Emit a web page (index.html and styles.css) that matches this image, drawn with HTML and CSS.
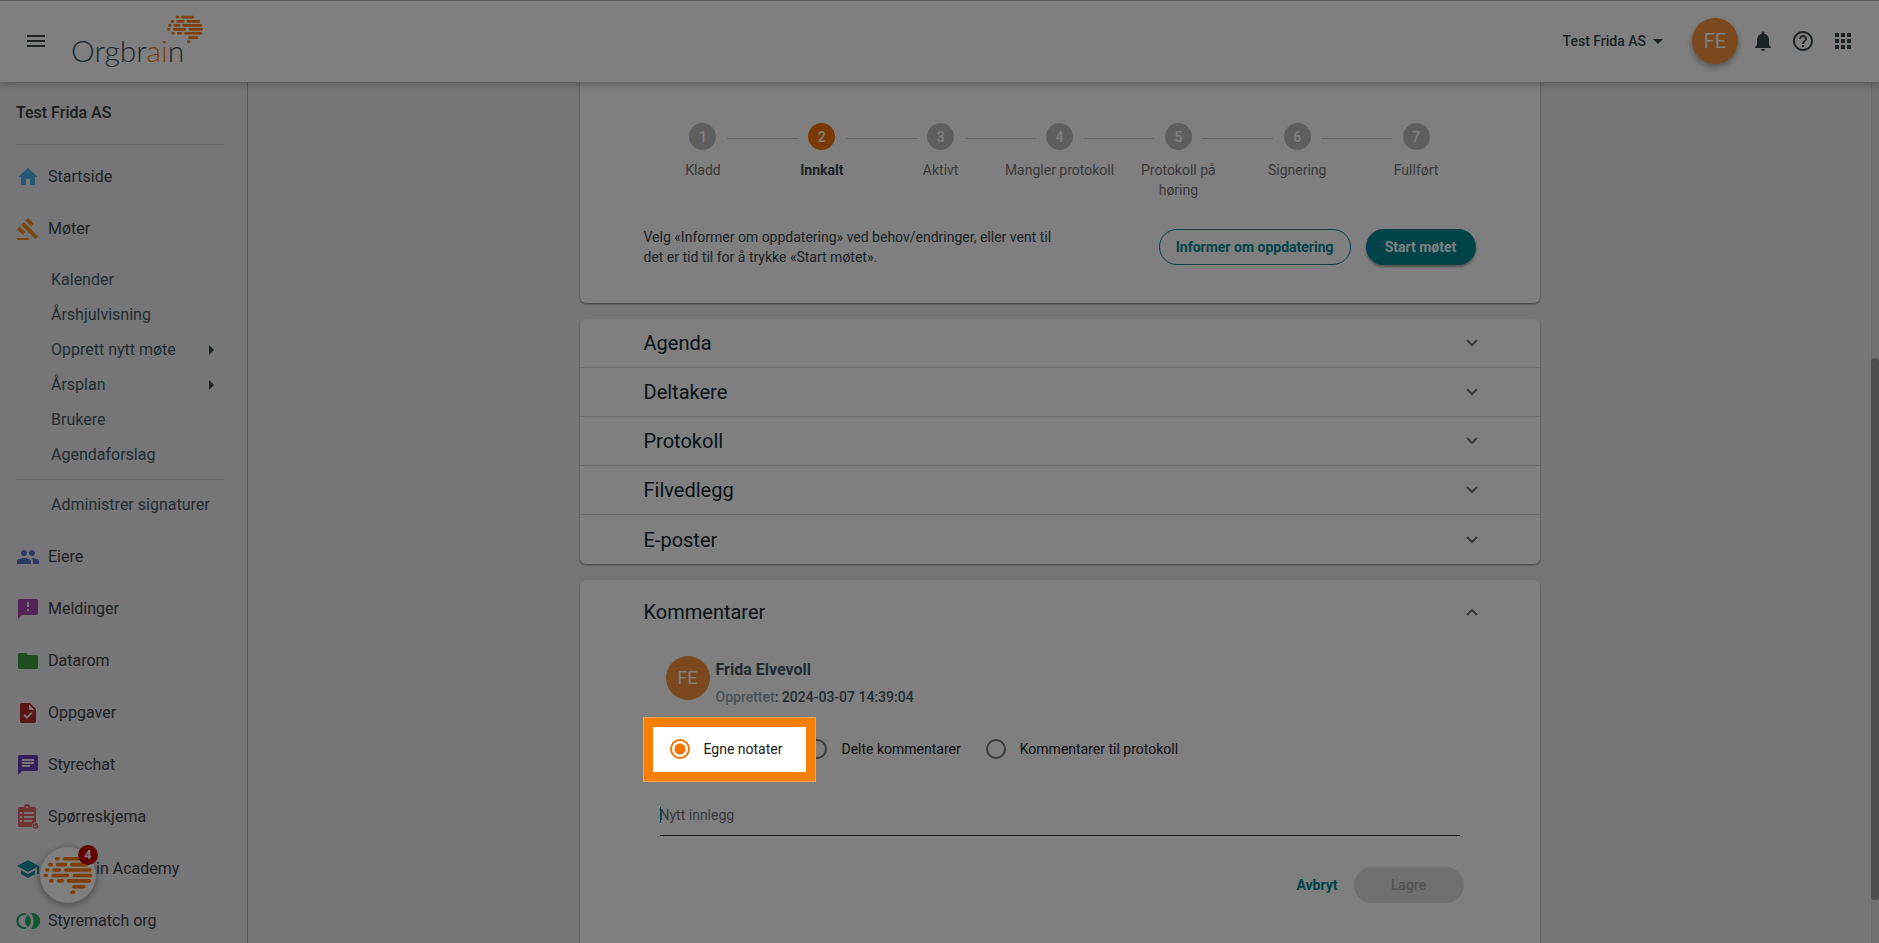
FILE: index.html
```html
<!DOCTYPE html>
<html lang="no">
<head>
<meta charset="utf-8">
<title>Orgbrain</title>
<link rel="stylesheet" href="styles.css">
</head>
<body>
<svg class="defs" aria-hidden="true">
  <symbol id="brain" viewBox="0 0 112 84">
    <path fill="none" stroke="currentColor" stroke-width="8" stroke-linecap="round" d="M30 6h3M47 6h31M15 19h3M32 19h17M63 19h33M8 31h2M24 31h12M50 31h53M5 43h2M22 43h32M69 43h36M17 55h2M34 55h8M56 55h46M68 68h22M64 80h3"/>
  </symbol>
  <symbol id="down" viewBox="0 0 12 8"><path fill="none" stroke="currentColor" stroke-width="2" d="M1 1l5 5 5-5"/></symbol>
</svg>

<header class="topbar">
  <button class="icon-btn" aria-label="Meny"><svg class="icon" viewBox="0 0 24 24"><path d="M3 18h18v-2H3v2zm0-5h18v-2H3v2zm0-7v2h18V6H3z"/></svg></button>
  <a class="logo" href="#"><span class="logo-text">Orgbr<span class="logo-accent">ai</span>n</span><svg class="logo-mark"><use href="#brain"/></svg></a>
  <div class="tools">
    <button class="org-btn">Test Frida AS<svg class="icon" viewBox="0 0 24 24"><path d="M7 10l5 5 5-5z"/></svg></button>
    <button class="avatar avatar-top">FE</button>
    <button class="icon-btn" aria-label="Varsler"><svg class="icon" viewBox="0 0 24 24"><path d="M12 22c1.1 0 2-.9 2-2h-4c0 1.1.89 2 2 2zm6-6v-5c0-3.07-1.64-5.64-4.5-6.32V4c0-.83-.67-1.5-1.5-1.5s-1.5.67-1.5 1.5v.68C7.63 5.36 6 7.92 6 11v5l-2 2v1h16v-1l-2-2z"/></svg></button>
    <button class="icon-btn" aria-label="Hjelp"><svg class="icon" viewBox="0 0 24 24"><path d="M11 18h2v-2h-2v2zm1-16C6.48 2 2 6.48 2 12s4.48 10 10 10 10-4.48 10-10S17.52 2 12 2zm0 18c-4.41 0-8-3.59-8-8s3.59-8 8-8 8 3.59 8 8-3.59 8-8 8zm0-14c-2.21 0-4 1.79-4 4h2c0-1.1.9-2 2-2s2 .9 2 2c0 2-3 1.75-3 5h2c0-2.25 3-2.5 3-5 0-2.21-1.79-4-4-4z"/></svg></button>
    <button class="icon-btn" aria-label="Apper"><svg class="icon" viewBox="0 0 24 24"><path d="M4 8h4V4H4v4zm6 12h4v-4h-4v4zm-6 0h4v-4H4v4zm0-6h4v-4H4v4zm6 0h4v-4h-4v4zm6-10v4h4V4h-4zm-6 4h4V4h-4v4zm6 6h4v-4h-4v4zm0 6h4v-4h-4v4z"/></svg></button>
  </div>
</header>

<div class="layout">
  <nav class="sidebar">
    <h2 class="side-title">Test Frida AS</h2>
    <hr class="rule">
    <div class="nav-group">
      <a class="nav-item" href="#"><svg class="icon c-blue" viewBox="0 0 24 24"><path d="M10 20v-6h4v6h5v-8h3L12 3 2 12h3v8z"/></svg>Startside</a>
      <a class="nav-item" href="#"><svg class="icon c-orange" viewBox="0 0 24 24"><path d="M5.25 8.07l2.83-2.83 14.13 14.15-2.83 2.83zM9.49 3.83L12.31 1l5.66 5.66-2.83 2.82zM1 12.31l2.83-2.82 5.65 5.65-2.82 2.83zM1 21h12v2H1z"/></svg>Møter</a>
    </div>
    <div class="sub-group">
      <a class="sub-item" href="#">Kalender</a>
      <a class="sub-item" href="#">Årshjulvisning</a>
      <a class="sub-item" href="#">Opprett nytt møte<svg class="icon" viewBox="0 0 24 24"><path d="M10 17l5-5-5-5z"/></svg></a>
      <a class="sub-item" href="#">Årsplan<svg class="icon" viewBox="0 0 24 24"><path d="M10 17l5-5-5-5z"/></svg></a>
      <a class="sub-item" href="#">Brukere</a>
      <a class="sub-item" href="#">Agendaforslag</a>
      <hr class="rule rule-sub">
      <a class="sub-item" href="#">Administrer signaturer</a>
    </div>
    <div class="nav-group">
      <a class="nav-item" href="#"><svg class="icon c-indigo" viewBox="0 0 24 24"><path d="M16 11c1.66 0 2.99-1.34 2.99-3S17.66 5 16 5c-1.66 0-3 1.34-3 3s1.34 3 3 3zm-8 0c1.66 0 2.99-1.34 2.99-3S9.66 5 8 5C6.34 5 5 6.34 5 8s1.34 3 3 3zm0 2c-2.33 0-7 1.17-7 3.5V19h14v-2.5c0-2.33-4.67-3.5-7-3.5zm8 0c-.29 0-.62.02-.97.05 1.16.84 1.97 1.97 1.97 3.45V19h6v-2.5c0-2.33-4.67-3.5-7-3.5z"/></svg>Eiere</a>
      <a class="nav-item" href="#"><svg class="icon c-purple" viewBox="0 0 24 24"><path d="M20 2H4c-1.1 0-1.99.9-1.99 2L2 22l4-4h14c1.1 0 2-.9 2-2V4c0-1.1-.9-2-2-2zm-7 12h-2v-2h2v2zm0-4h-2V5h2v5z"/></svg>Meldinger</a>
      <a class="nav-item" href="#"><svg class="icon c-green" viewBox="0 0 24 24"><path d="M10 4H4c-1.1 0-1.99.9-1.99 2L2 18c0 1.1.9 2 2 2h16c1.1 0 2-.9 2-2V8c0-1.1-.9-2-2-2h-8l-2-2z"/></svg>Datarom</a>
      <a class="nav-item" href="#"><svg class="icon c-red" viewBox="0 0 24 24"><path d="M14 2H6c-1.1 0-1.99.9-1.99 2L4 20c0 1.1.89 2 1.99 2H18c1.1 0 2-.9 2-2V8l-6-6zm-3.06 16L7.4 14.46l1.41-1.41 2.12 2.12 4.24-4.24 1.41 1.41L10.94 18zM13 9V3.5L18.5 9H13z"/></svg>Oppgaver</a>
      <a class="nav-item" href="#"><svg class="icon c-violet" viewBox="0 0 24 24"><path d="M20 2H4c-1.1 0-1.99.9-1.99 2L2 22l4-4h14c1.1 0 2-.9 2-2V4c0-1.1-.9-2-2-2zM6 9h12v2H6V9zm8 5H6v-2h8v2zm4-6H6V6h12v2z"/></svg>Styrechat</a>
      <a class="nav-item" href="#"><svg class="icon c-coral" viewBox="0 0 24 24"><path fill-rule="evenodd" d="M3.500 2H8a3 3 0 0 1 6 0h4.500A1.500 1.500 0 0 1 20 3.500V17a4 4 0 0 0-4 5H3.500A1.500 1.500 0 0 1 2 20.500v-17A1.500 1.500 0 0 1 3.500 2zM11 1.200a1 1 0 1 0 0 2 1 1 0 0 0 0-2zM4 7v2h2V7zm4 0v2h10V7zm-4 4v2h2v-2zm4 0v2h10v-2zm-4 4v2h2v-2zm4 0v2h8v-2z"/><circle cx="19.500" cy="21" r="2.800"/><path class="tick" d="M18 21l1.200 1.200 1.900-2"/></svg>Spørreskjema</a>
      <a class="nav-item" href="#"><svg class="icon c-teal" viewBox="0 0 24 24"><path d="M5 13.180v4L12 21l7-3.820v-4L12 17l-7-3.820zM12 3L1 9l11 6 9-4.910V17h2V9L12 3z"/></svg>Orgbrain Academy</a>
      <a class="nav-item" href="#"><svg class="icon c-emerald" viewBox="0 0 24 24"><path d="M16 4a8 8 0 1 1-1.500 15.800c4-3.600 4-12 0-15.600A8 8 0 0 1 16 4z"/><path d="M12 6c4 3.400 4 8.600 0 12-4-3.400-4-8.600 0-12z"/><path class="ring" d="M10 5.200a7 7 0 1 0 0 13.600"/></svg>Styrematch org</a>
    </div>
    <button class="chat-ball" aria-label="Orgbrain hjelp"><svg class="ball-mark"><use href="#brain"/></svg><span class="badge">4</span></button>
  </nav>

  <main class="content">
    <section class="card status-card">
      <ol class="stepper">
        <li class="step"><span class="dot">1</span><span class="step-label">Kladd</span></li>
        <li class="step active"><span class="dot">2</span><span class="step-label">Innkalt</span></li>
        <li class="step"><span class="dot">3</span><span class="step-label">Aktivt</span></li>
        <li class="step"><span class="dot">4</span><span class="step-label">Mangler protokoll</span></li>
        <li class="step"><span class="dot">5</span><span class="step-label">Protokoll på høring</span></li>
        <li class="step"><span class="dot">6</span><span class="step-label">Signering</span></li>
        <li class="step"><span class="dot">7</span><span class="step-label">Fullført</span></li>
      </ol>
      <div class="status-row">
        <p class="status-text">Velg «Informer om oppdatering» ved behov/endringer, eller vent til det er tid til for å trykke «Start møtet».</p>
        <div class="actions">
          <button class="btn btn-outline">Informer om oppdatering</button>
          <button class="btn btn-solid">Start møtet</button>
        </div>
      </div>
    </section>

    <section class="card">
      <button class="panel">Agenda<svg class="chevron"><use href="#down"/></svg></button>
      <button class="panel">Deltakere<svg class="chevron"><use href="#down"/></svg></button>
      <button class="panel">Protokoll<svg class="chevron"><use href="#down"/></svg></button>
      <button class="panel">Filvedlegg<svg class="chevron"><use href="#down"/></svg></button>
      <button class="panel">E-poster<svg class="chevron"><use href="#down"/></svg></button>
    </section>

    <section class="card comments">
      <button class="panel panel-open">Kommentarer<svg class="chevron chevron-up"><use href="#down"/></svg></button>
      <div class="author">
        <span class="avatar">FE</span>
        <div>
          <div class="author-name">Frida Elvevoll</div>
          <div class="author-date"><span class="muted">Opprettet</span>: 2024-03-07 14:39:04</div>
        </div>
      </div>
      <div class="radios">
        <label class="radio spotlight"><input type="radio" name="kind" checked>Egne notater</label>
        <label class="radio"><input type="radio" name="kind">Delte kommentarer</label>
        <label class="radio"><input type="radio" name="kind">Kommentarer til protokoll</label>
      </div>
      <div class="field"><input class="field-input" type="text" placeholder="Nytt innlegg" aria-label="Nytt innlegg"></div>
      <div class="actions form-actions">
        <button class="btn btn-text">Avbryt</button>
        <button class="btn btn-solid" disabled>Lagre</button>
      </div>
    </section>
  </main>
  <div class="scrollbar"><div class="thumb"></div></div>
</div>
</body>
</html>
```

FILE: styles.css
```css
* { box-sizing: border-box; }

body {
  margin: 0;
  height: 100vh;
  overflow: hidden;
  display: flex;
  flex-direction: column;
  background: #ecedf0;
  color: #37474f;
  font: 14px/20px Roboto, "Liberation Sans", sans-serif;
}

button {
  margin: 0;
  padding: 0;
  border: 0;
  background: none;
  color: inherit;
  font: inherit;
}

a { color: inherit; text-decoration: none; }

.defs { position: absolute; width: 0; height: 0; }
.icon { display: block; flex: none; width: 24px; height: 24px; fill: currentColor; }

/* Top bar */
.topbar {
  position: relative;
  z-index: 10;
  flex: none;
  display: flex;
  align-items: center;
  height: 82px;
  padding: 0 24px 1px;
  border-top: 1px solid #b8b8b8;
  background: #fff;
  box-shadow: 0 2px 8px rgba(0, 0, 0, .3);
}
.logo { position: relative; margin-left: 23px; padding-top: 18px; }
.logo-text {
  display: block;
  color: #37525f;
  font: 300 30px/34px Lato, sans-serif;
}
.logo-accent { color: #f97a00; }
.logo-mark {
  position: absolute;
  left: 96px;
  top: 0;
  width: 37px;
  height: 28px;
  color: #ff7a00;
}
.tools { display: flex; align-items: center; gap: 16px; margin-left: auto; }
.org-btn { display: flex; align-items: center; margin-right: 6px; font-weight: 500; }
.avatar {
  flex: none;
  display: flex;
  align-items: center;
  justify-content: center;
  width: 44px;
  height: 44px;
  border-radius: 50%;
  background: #f9923c;
  color: #fff;
  font-size: 18px;
}
.avatar-top {
  width: 46px;
  height: 46px;
  margin-right: -3px;
  font-size: 20px;
  box-shadow: 0 3px 6px rgba(0, 0, 0, .35);
}

/* Page columns */
.layout {
  flex: 1;
  min-height: 0;
  display: grid;
  grid-template-columns: 248px 1fr 8px;
  grid-template-rows: minmax(0, 1fr);
}

.sidebar { position: relative; border-right: 1px solid #adb0b3; font-size: 16px; }
.side-title { margin: 0; padding: 20px 16px; font: 500 16px/22px Roboto, sans-serif; color: #3a3d3f; }
.rule { height: 1px; margin: 0 23px 6px 16px; border: 0; background: #cbcdcf; }
.rule-sub { margin: 7px 23px 7px 16px; }
.nav-item {
  display: flex;
  align-items: center;
  gap: 8px;
  height: 52px;
  padding-left: 16px;
  color: #3f4345;
}
.sub-group { padding: 7px 0 9px; }
.sub-item {
  display: flex;
  align-items: center;
  justify-content: space-between;
  height: 35px;
  padding: 0 24px 0 51px;
  color: #455a64;
}
.sub-item .icon { color: #37474f; }

.c-blue { color: #48b0ea; }
.c-orange { color: #f58a1f; }
.c-indigo { color: #5470c4; }
.c-purple { color: #a646ae; }
.c-green { color: #3c9a40; }
.c-red { color: #b82a2a; }
.c-violet { color: #6c3fb8; }
.c-coral { color: #e06464; overflow: visible; }
.c-teal { color: #1a8a9c; }
.c-emerald { color: #22a860; }
.tick { fill: none; stroke: #ecedf0; }
.ring { fill: none; stroke: currentColor; stroke-width: 2; }

.chat-ball {
  position: absolute;
  left: 40px;
  bottom: 40px;
  display: grid;
  place-items: center;
  width: 56px;
  height: 56px;
  border-radius: 50%;
  background: #fff;
  color: #ff7a00;
  box-shadow: 0 2px 8px rgba(0, 0, 0, .4);
}
.ball-mark { width: 51px; height: 38px; }
.badge {
  position: absolute;
  right: -2px;
  top: -2px;
  width: 20px;
  height: 20px;
  border-radius: 50%;
  background: #c40000;
  color: #fff;
  font: 700 12px/20px "Open Sans", sans-serif;
}

/* Cards */
.content { padding: 0 16px; }
.card {
  max-width: 960px;
  margin: 0 auto 16px;
  border-radius: 6px;
  background: #fff;
  box-shadow: 0 1px 2px rgba(0, 0, 0, .5);
}
.status-card { padding: 41px 64px 36px; border-radius: 0 0 6px 6px; }

.stepper { display: flex; margin: 0 0 27px; padding: 0; list-style: none; }
.step {
  position: relative;
  flex: 1 1 0;
  display: flex;
  flex-direction: column;
  align-items: center;
  gap: 10px;
  color: #757575;
  text-align: center;
}
.step + .step::before {
  content: "";
  position: absolute;
  top: 15px;
  left: calc(-50% + 24px);
  right: calc(50% + 24px);
  height: 1px;
  background: #cfcfcf;
}
.dot {
  width: 27px;
  height: 27px;
  border-radius: 50%;
  background: #bdbdbd;
  color: #fff;
  font-weight: 500;
  line-height: 28px;
}
.active .dot { background: #f57300; }
.step-label { padding: 0 4px; }
.step:nth-child(5) .step-label { padding: 0 16px; }
.active .step-label { color: #37474f; font-weight: 700; }

.status-row { display: flex; align-items: center; justify-content: space-between; }
.status-text { flex: 0 1 420px; margin: 0; }
.actions { display: flex; align-items: center; gap: 15px; }
.btn { height: 36px; padding: 0 16px; border-radius: 18px; font-weight: 700; }
.btn-outline { border: 1px solid #008793; color: #008793; }
.btn-solid { min-width: 110px; background: #008793; color: #fff; box-shadow: 0 2px 3px rgba(0, 0, 0, .4); }
.btn-solid:disabled { background: #dedede; color: #a4a4a4; font-weight: 500; box-shadow: none; }
.btn-text { color: #008793; }

.panel {
  display: flex;
  align-items: center;
  justify-content: space-between;
  width: 100%;
  height: 49px;
  padding: 0 62px 0 64px;
  border-bottom: 1px solid #d8d8d8;
  color: #12262f;
  font-size: 20px;
}
.panel:last-of-type { border-bottom: 0; }
.chevron { width: 12px; height: 8px; color: #757575; }
.chevron-up { transform: rotate(180deg); }
.panel-open { height: 64px; }

.comments { height: 400px; }
.author { display: flex; gap: 6px; padding: 12px 86px 0; }
.author-name { padding-top: 4px; font: 700 16px/20px Roboto, sans-serif; color: #455a64; }
.author-date { padding-top: 7px; font-weight: 500; color: #455a64; }
.muted { color: #90a4ae; }

.radios { display: flex; gap: 25px; padding: 32px 90px 0; color: #212121; }
.radio { position: relative; display: flex; align-items: center; gap: 14px; }
.radio input {
  appearance: none;
  width: 20px;
  height: 20px;
  margin: 0;
  border: 2px solid #757575;
  border-radius: 50%;
}
.radio input:checked {
  border-color: #f57300;
  background: radial-gradient(circle, #f57300 5px, #fff 6px);
}

/* Guide highlight: frames one control and dims the rest of the page */
.spotlight::after {
  content: "";
  position: absolute;
  z-index: 100;
  inset: -22px -34px -23px -27px;
  border: 10px solid #f77f00;
  outline: 1px solid #ffa64d;
  outline-offset: -1px;
  box-shadow: 0 0 0 4000px rgba(0, 0, 0, .5);
  pointer-events: none;
}

.field { position: relative; margin: 40px 80px 0; }
.field::before {
  content: "";
  position: absolute;
  left: 0;
  top: 8px;
  width: 1px;
  height: 16px;
  background: #00838f;
}
.field-input {
  display: block;
  width: 100%;
  height: 37px;
  padding: 0 0 4px;
  border: 0;
  border-bottom: 1px solid #212b30;
  background: none;
  font: inherit;
}
.field-input::placeholder { color: #757575; opacity: 1; }
.form-actions { justify-content: flex-end; gap: 0; padding: 31px 76px 0; }

.scrollbar { position: relative; background: #e2e3e5; border-left: 1px solid #d4d5d7; }
.thumb {
  position: absolute;
  inset: 32% 0 5% -1px;
  border-radius: 4px;
  background: #9a9a9a;
}
```
